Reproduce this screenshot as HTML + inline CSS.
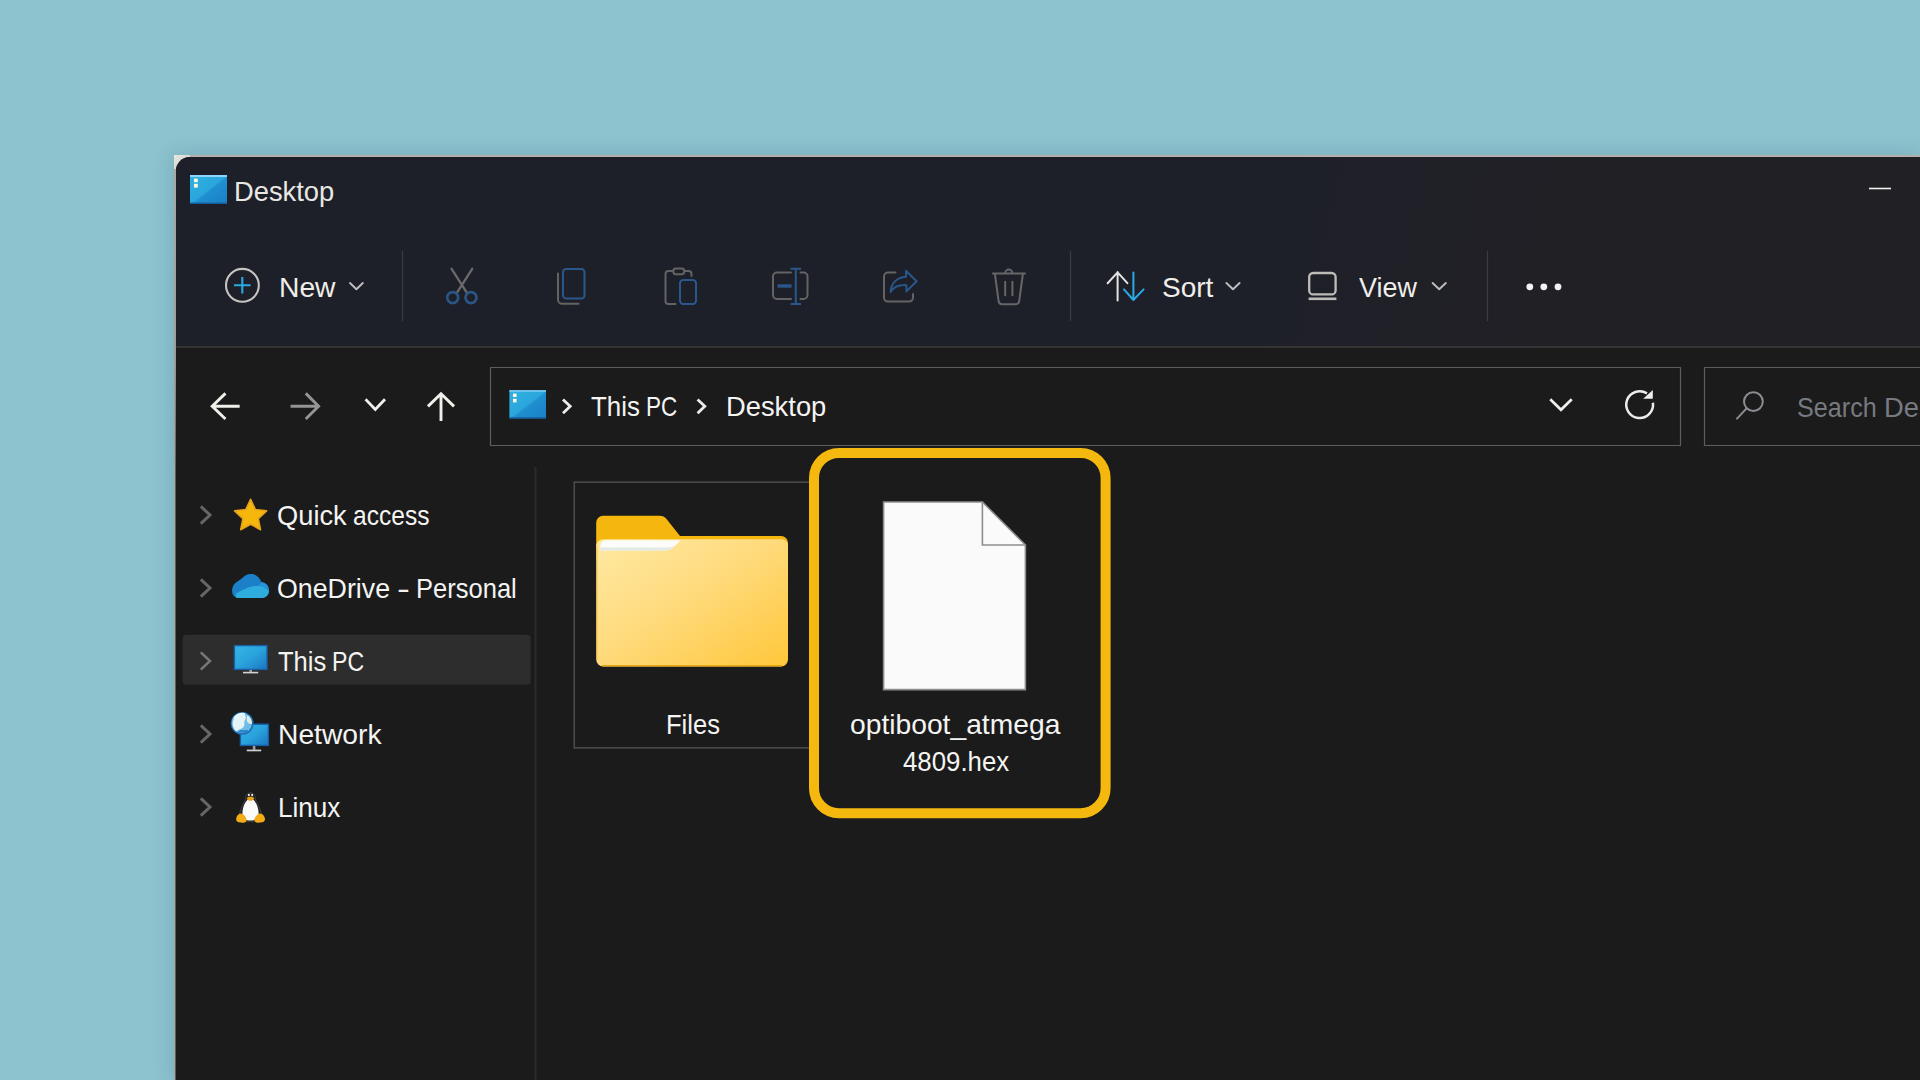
<!DOCTYPE html>
<html>
<head>
<meta charset="utf-8">
<title>Desktop</title>
<style>
  html, body { margin: 0; padding: 0; overflow: hidden; }
  body {
    width: 1920px; height: 1080px; overflow: hidden; position: relative;
    background: #8cc3cf;
    font-family: "Liberation Sans", sans-serif;
    color: #f4f4f2;
  }
  .abs { position: absolute; }
  /* window */
  #win {
    position: absolute; left: 176px; top: 157px; width: 1744px; height: 923px;
    background: #1b1b1b;
    border-top-left-radius: 14px;
    overflow: hidden;
  }
  #frame { position:absolute; left:174px; top:155px; width:1746px; height:925px; background:linear-gradient(#a5a19f 0,#9d9997 200px,#8a8888 100%); box-shadow:0 1px 20px 1px rgba(10,40,50,.15); }
  #edgeLeft { position:absolute; left:174px; top:171px; width:2px; height:909px; background:linear-gradient(90deg,#aaa7a5 0,#a29f9d 45%,#6a6969 62%,#4a4949 100%); }
  #corner { position:absolute; left:174px; top:155px; width:16px; height:16px; background:linear-gradient(135deg,#e8e7e0 0,#dcdad6 45%,#b5b1ae 100%); }
  #edgeLeftTop { position:absolute; left:174px; top:169px; width:2px; height:300px; background:linear-gradient(#aaa6a4 0,#9f9b99 60%,rgba(159,155,153,0) 100%); }
  #edgeTop { position:absolute; left:188px; top:155px; width:1732px; height:2px; background:#b3afac; }
    #chrome { position:absolute; left:0; top:0; width:1744px; height:190px; background:linear-gradient(104deg,#1e2029 0,#1e2029 63%,#202027 72%,#212025 80%,#212024 100%); }
  #chromeLine { position:absolute; left:0; top:189px; width:100%; height:2px; background:#343434; }
  .t { position:absolute; white-space:nowrap; font-size:28.5px; line-height:30px; transform-origin:left top; }
  svg { position:absolute; overflow:visible; }
</style>
</head>
<body>
<div id="frame"></div>
<div id="edgeTop"></div>
<div id="corner"></div>
<div id="win">
  <div id="chrome"></div>
  <div id="chromeLine"></div>
</div>
<div id="edgeLeft"></div>
<div id="edgeLeftTop"></div>

<!-- SIDEBAR + CONTENT LAYER -->
<svg id="main" width="1920" height="1080" viewBox="0 0 1920 1080" style="left:0;top:0;" fill="none" stroke-linecap="round" stroke-linejoin="round">
  <!-- sidebar divider -->
  <rect x="534.4" y="467" width="2.2" height="613" fill="#2b2a2c"/>
  <!-- selected row -->
  <rect x="182.6" y="634.8" width="348.2" height="50" rx="4" fill="#2d2d2d"/>
  <!-- chevrons -->
  <g stroke="#666666" stroke-width="3" stroke-linecap="butt" stroke-linejoin="miter">
    <path d="M200.8 506.4L210 515 200.8 523.6"/>
    <path d="M200.8 579.4L210 588 200.8 596.6"/>
    <path d="M200.8 652.4L210 661 200.8 669.6" stroke="#787878" stroke-width="2.5"/>
    <path d="M200.8 725.4L210 734 200.8 742.6"/>
    <path d="M200.8 798.4L210 807 200.8 815.6"/>
  </g>
  <!-- star -->
  <path d="M250.6 499.3 L255.4 509.5 L266.6 510.9 L258.3 518.6 L260.5 529.7 L250.6 524.2 L240.7 529.7 L242.9 518.6 L234.6 510.9 L245.8 509.5Z" fill="#f6b70d" stroke="#e6a21a" stroke-width="1.6" stroke-linejoin="round"/>
  <!-- onedrive -->
  <g>
    <path d="M238.600 598C234.600 598 232 594.600 232.100 590.400 232.200 587 233.400 584.600 236 582.600 239 580.400 241 579.400 242.600 577.800 244.600 575.400 247.400 574 250.800 574 255.400 574 259.400 577 261.600 582.200 265.800 582.600 269.100 585.800 269.100 590.200 269.100 594.600 265.600 598 261.200 598Z" fill="#1c80c9"/>
    <path d="M258 586C259.600 584.800 260.800 583.600 261.600 582.200 265.400 582.600 268.400 585.400 269 589.600 267.800 588.200 266.200 587.400 264.500 587 262.400 586.200 260 586 258 586Z" fill="#2794da"/>
    <path d="M236.400 597.400C235.600 596 235.600 594.600 236 593.400L242.700 590.100C246 588.400 249 587 252 586.500 256 585.800 261 586 264.500 587.400 266.500 588.200 268.200 589.600 269 591.400 268.600 595.200 265.400 598 261.200 598H238.600C237.800 598 237 597.800 236.400 597.400Z" fill="#2eacdd"/>
  </g>
  <!-- this pc -->
  <g>
    <rect x="234.400" y="645.600" width="32.600" height="23.800" fill="url(#gMon)" stroke="#1a5ea6" stroke-width="1.400" stroke-linejoin="miter"/>
    <rect x="249.400" y="669.800" width="2.600" height="2.400" fill="#9aa0a6"/>
    <rect x="243" y="671.800" width="15.200" height="1.600" fill="#cfd2d4"/>
  </g>
  <!-- network -->
  <g>
    <rect x="240.400" y="724.200" width="28" height="21.200" fill="url(#gMon)" stroke="#1a5ea6" stroke-width="1.400" stroke-linejoin="miter"/>
    <rect x="252.800" y="746" width="2.600" height="3.800" fill="#9aa0a6"/>
    <rect x="246.800" y="749.600" width="14.400" height="1.700" fill="#cfd2d4"/>
    <circle cx="242.200" cy="723.400" r="11.400" fill="#1f6fb5"/>
    <circle cx="241.800" cy="723" r="10.200" fill="#6dbbe8"/>
    <path d="M233.600 719.500C235.500 715.500 240 713.200 244 713.600 246 715.500 246.500 718 245 720 243.500 722 245.500 724.500 243.500 727 241.500 729.500 238.500 729 236.500 731.500 233 729 231.800 723.500 233.600 719.500Z" fill="#e6f3f6"/>
    <path d="M247.500 715.200C250.500 717 252.200 720.500 251.900 724 249.800 724.500 247 723 246.800 720.500 246.700 718.500 246.800 716.500 247.500 715.200Z" fill="#dfeee0"/>
    <path d="M238 731.500C241 733.500 245.500 733 248.500 730.500 246.500 729.500 244 730.500 242 730 240.500 729.700 239 730.500 238 731.500Z" fill="#2a86cf"/>
    <path d="M234 718C236.500 714.500 240.500 713 244.500 713.500" stroke="#f4fbff" stroke-width="1.200"/>
  </g>
  <!-- linux tux -->
  <g>
    <path d="M250.400 792.800C253.800 792.800 255.400 795.600 255.400 798.800 255.400 802 260.600 807.600 261.200 813.600 261.600 818 257.600 821.800 250.400 821.800 243.200 821.800 239.200 818 239.600 813.600 240.200 807.600 245.400 802 245.400 798.800 245.400 795.600 247 792.800 250.400 792.800Z" fill="#202020" stroke="#444444" stroke-width="0.900"/>
    <path d="M250.400 798.600C254.600 798.600 258.600 806.800 258.600 813.400 258.600 818.400 255.200 820.600 250.400 820.600 245.600 820.600 242.400 818.400 242.400 813.400 242.400 806.800 246.200 798.600 250.400 798.600Z" fill="#fbfbfa"/>
    <ellipse cx="248.800" cy="795" rx="1" ry="1.200" fill="#e8e8e8"/>
    <ellipse cx="252.200" cy="795" rx="1" ry="1.200" fill="#e8e8e8"/>
    <path d="M246.800 798.200C247.600 796.200 253.400 796.200 254.200 798.200 253.600 800 251.800 800.800 250.400 800.800 249 800.800 247.400 800 246.800 798.200Z" fill="#eba21c"/>
    <path d="M236.200 819.800C236 816.600 238.400 813.200 241 813.400 243.600 813.600 246.800 817.600 246.600 820.200 246.400 822.600 243.200 823 240.400 822.600 238 822.300 236.400 821.600 236.200 819.800Z" fill="#f3ab16"/>
    <path d="M265 819.400C265.200 816.600 262.600 813.200 260 813.400 257.400 813.600 254.200 817.600 254.400 820.200 254.600 822.600 257.800 823 260.600 822.600 263 822.300 264.800 821.400 265 819.400Z" fill="#f3ab16"/>
  </g>

  <!-- Files item box -->
  <path d="M812 482.200H574.200V747.800H812" stroke="#585858" stroke-width="1.200" stroke-linejoin="miter" stroke-linecap="butt"/>
  <!-- folder -->
  <g>
    <path d="M596.200 522.800a7 7 0 0 1 7-7H659.500c3.600 0 5.800 1.400 7.600 4L680 536H781a7 7 0 0 1 7 7V560H596.200Z" fill="#f5b70e"/>
    <path d="M596.200 546.600a7.400 7.400 0 0 1 7.400-7.400H781.600a6.400 6.400 0 0 1 6.400 6.400V659.600a7 7 0 0 1-7 7H603.200a7 7 0 0 1-7-7Z" fill="url(#gFolder)"/>
    <path d="M600.400 546.400c0-4 2.400-6.200 6.200-6.200H681c-4.600 2.600-7 9.800-15.500 10.200H600.400Z" fill="#fcfdfb"/>
    <path d="M600.400 547.400v3H665.500c4.400-0.200 7-2.200 9.400-5.200-2.400 1.600-5 2.200-8.400 2.200Z" fill="#e2eae5"/>
    <path d="M602 665.800H782" stroke="#e6a817" stroke-width="1.600" stroke-linecap="butt"/>
    <path d="M596.900 546.600V659" stroke="#f0b630" stroke-width="1.200" stroke-linecap="butt" opacity="0.7"/>
  </g>
  <!-- yellow highlight -->
  <rect x="814" y="453" width="291.600" height="360.200" rx="25" fill="#1b1b1b" stroke="#f4b80e" stroke-width="10"/>
  <!-- file -->
  <g>
    <path d="M883.600 502H982.400L1025.400 545V689.600H883.600Z" fill="#fafafa" stroke="#8e8e8e" stroke-width="1.600" stroke-linejoin="miter"/>
    <path d="M982.400 502V545H1025.400" fill="none" stroke="#8e8e8e" stroke-width="1.600" stroke-linejoin="miter"/>
  </g>
</svg>

<!-- ICON LAYER -->
<svg id="ico" width="1920" height="1080" viewBox="0 0 1920 1080" style="left:0;top:0;" fill="none" stroke-linecap="round" stroke-linejoin="round">
  <defs>
    <linearGradient id="gDesk" x1="0" y1="0" x2="1" y2="1">
      <stop offset="0" stop-color="#2fb2e2"/><stop offset="0.5" stop-color="#2aa6dc"/><stop offset="0.55" stop-color="#1f8fd0"/><stop offset="1" stop-color="#1a7fc6"/>
    </linearGradient>
    <linearGradient id="gFolder" x1="0" y1="0" x2="1" y2="1">
      <stop offset="0" stop-color="#ffe9a3"/><stop offset="0.45" stop-color="#ffdb7e"/><stop offset="1" stop-color="#ffc73a"/>
    </linearGradient>
    <linearGradient id="gMon" x1="0" y1="0" x2="1" y2="1">
      <stop offset="0" stop-color="#35b6e6"/><stop offset="0.5" stop-color="#2aa3dc"/><stop offset="1" stop-color="#1976c2"/>
    </linearGradient>
  </defs>

  <!-- title icon -->
  <g id="icoTitle">
    <rect x="190" y="175" width="37" height="29" fill="url(#gDesk)"/>
    <rect x="190" y="175" width="37" height="2" fill="#8fd4ff"/>
    <rect x="190" y="202.5" width="37" height="1.5" fill="#155f9e"/>
    <rect x="194" y="178.6" width="3.8" height="3.6" fill="#fff6dc"/>
    <rect x="194" y="183.8" width="3.8" height="3.8" fill="#fff6dc"/>
  </g>
  <!-- minimize -->
  <path d="M1869 188.5H1891" stroke="#f0f0f0" stroke-width="1.6" stroke-linecap="butt"/>

  <!-- New -->
  <circle cx="242.4" cy="285.3" r="16.4" stroke="#c6c4c1" stroke-width="2.1"/>
  <path d="M234 285.3H250.6M242.3 277V293.6" stroke="#2aa9e4" stroke-width="2.1" stroke-linecap="butt"/>
  <path d="M350 283l6.4 6.2 6.4-6.2" stroke="#bfbfbf" stroke-width="1.9"/>
  <!-- separators -->
  <path d="M402.5 251V321M1070.5 251V321M1487.5 251V321" stroke="#3c3d44" stroke-width="1.2" stroke-linecap="butt"/>

  <!-- cut -->
  <g stroke-width="2">
    <path d="M451.600 268.800L466.800 292.600M472.200 268.800L457 292.600" stroke="#6a6a6a" stroke-width="2.300"/>
    <circle cx="452.700" cy="297.600" r="5.500" stroke="#2a5585" stroke-width="2.700"/>
    <circle cx="471" cy="297.600" r="5.500" stroke="#2a5585" stroke-width="2.700"/>
  </g>
  <!-- copy -->
  <g stroke-width="2">
    <path d="M558 273.5V299.5a4.2 4.2 0 0 0 4.2 4.2H578.5" stroke="#636363"/>
    <rect x="563" y="269" width="21.5" height="29.6" rx="3.2" stroke="#2a578b"/>
  </g>
  <!-- paste -->
  <g stroke-width="2">
    <path d="M675.5 304H668.5a3 3 0 0 1-3-3V274a3 3 0 0 1 3-3H673M684.5 271H688.5a3 3 0 0 1 3 3V276" stroke="#636363"/>
    <rect x="673.3" y="268.6" width="11" height="5.6" rx="2.6" stroke="#636363"/>
    <rect x="680" y="280" width="16" height="24" rx="3.2" stroke="#2a578b"/>
  </g>
  <!-- rename -->
  <g stroke-width="2">
    <path d="M791 272.5H777a4 4 0 0 0-4 4V295a4 4 0 0 0 4 4H791M800.5 272.5H803.5a4 4 0 0 1 4 4V295a4 4 0 0 1-4 4H800.5" stroke="#636363"/>
    <path d="M795.8 268.8V304M790.6 268.8H801M790.6 304H801" stroke="#2a578b" stroke-linecap="butt"/>
    <path d="M777.6 286H791.6" stroke="#2a578b" stroke-width="3.4" stroke-linecap="butt"/>
  </g>
  <!-- share -->
  <g stroke-width="2">
    <path d="M895.5 272.6H888a4 4 0 0 0-4 4V297.6a4 4 0 0 0 4 4H909a4 4 0 0 0 4-4V294" stroke="#636363"/>
    <path d="M906 270.8L916.6 281.2 906.4 291.4V285.2C899.5 284.6 894.2 286.6 890.6 292 891.2 283.4 896.6 277.6 906 276.8Z" stroke="#2a578b"/>
  </g>
  <!-- delete -->
  <g stroke-width="2" stroke="#666666">
    <path d="M992.8 273.6H1025"/>
    <path d="M1005.2 273.2a3.6 3.6 0 0 1 7.2 0"/>
    <path d="M995 274.5L998.6 301.2a3.4 3.4 0 0 0 3.4 3H1015.8a3.4 3.4 0 0 0 3.4-3L1022.8 274.5"/>
    <path d="M1005.2 281.8V295.2M1012.4 281.8V295.2"/>
  </g>
  <!-- sort -->
  <g stroke-width="2">
    <path d="M1117.6 272V300.4M1107.6 283.2L1117.6 272.4 1127.4 283.2" stroke="#e4e4e2"/>
    <path d="M1133.4 272.4V300M1124 289.4L1133.4 300 1143.6 289.4" stroke="#2aa9e4"/>
  </g>
  <path d="M1226.4 283l6.6 6.2 6.6-6.2" stroke="#bfbfbf" stroke-width="1.9"/>
  <!-- view -->
  <rect x="1309.2" y="273" width="26.4" height="21.4" rx="4" stroke="#bebcb9" stroke-width="2.3"/>
  <path d="M1308.6 298.8H1336.4" stroke="#bebcb9" stroke-width="2.6" stroke-linecap="butt"/>
  <path d="M1432.6 283l6.6 6.2 6.6-6.2" stroke="#bfbfbf" stroke-width="1.9"/>
  <!-- more -->
  <g fill="#f2f2f2"><circle cx="1529.8" cy="286.8" r="3.4"/><circle cx="1543.8" cy="286.8" r="3.4"/><circle cx="1558" cy="286.8" r="3.4"/></g>

  <!-- nav arrows -->
  <g stroke-width="2.9" stroke-linecap="square" stroke-linejoin="miter">
    <path d="M238.2 406.2H213M224.4 394.4L212.2 406.2 224.400 418" stroke="#f0f0ea"/>
    <path d="M292 406.2H317.200M306.800 394.400L318.600 406.200 306.800 418" stroke="#959595"/>
    <path d="M366.600 400.400L375.300 409.400 384 400.400" stroke="#f0f0ea"/>
    <path d="M441 419.600V395M429 405.400L441 393.800 453 405.400" stroke="#f0f0ea"/>
  </g>
  <!-- address box + search box -->
  <rect x="490.5" y="367.5" width="1190" height="78" stroke="#5e5e5e" stroke-width="1.2"/>
  <path d="M1920 367.5H1704.5V445.5H1920" stroke="#5e5e5e" stroke-width="1.2"/>
  <g id="icoAddr">
    <rect x="509.4" y="390.2" width="36.6" height="28.2" fill="url(#gDesk)"/>
    <rect x="509.4" y="390.2" width="36.6" height="1.6" fill="#7fcaf5"/>
    <rect x="509.4" y="417.2" width="36.6" height="1.4" fill="#155f9e"/>
    <rect x="513" y="393.6" width="3.6" height="3.4" fill="#fff6dc"/>
    <rect x="513" y="398.8" width="3.6" height="3.6" fill="#fff6dc"/>
  </g>
  <path d="M564 400.400L570.200 406.300 564 412.200M698.600 400.400L704.800 406.300 698.600 412.200" stroke="#ececec" stroke-width="2.8" stroke-linecap="square" stroke-linejoin="miter"/>
  <path d="M1551.200 400.200L1561 409.800 1570.800 400.200" stroke="#f0f0ea" stroke-width="2.700" stroke-linecap="square" stroke-linejoin="miter"/>
  <!-- refresh -->
  <path d="M1652.92 402.79A13.4 13.4 0 1 1 1646.95 393.41" stroke="#ececec" stroke-width="2.5" stroke-linecap="butt"/>
  <path d="M1643.2 398.8L1652.8 390V398.800Z" fill="#ececec"/>
  <!-- search icon -->
  <circle cx="1753.4" cy="401.6" r="9.4" stroke="#8b8d92" stroke-width="2"/>
  <path d="M1746.6 408.4L1737 418.6" stroke="#8b8d92" stroke-width="2"/>
</svg>

<!-- TEXT START -->
<div class="t" id="tTitle" style="left:234.08px; top:176px; transform:scaleX(0.9583); color:#e9e7e3;">Desktop</div>
<div class="t" id="tNew" style="left:279.12px; top:272px; transform:scaleX(0.9909); color:#efeee9;">New</div>
<div class="t" id="tSort" style="left:1161.72px; top:272px; transform:scaleX(0.9824); color:#efeee9;">Sort</div>
<div class="t" id="tView" style="left:1358.75px; top:272px; transform:scaleX(0.9444); color:#efeee9;">View</div>
<div class="t" id="tPC1" style="left:591.10px; top:391px; transform:scaleX(0.9075);">This</div>
<div class="t" id="tPC2" style="left:646.22px; top:391px; transform:scaleX(0.7892);">PC</div>
<div class="t" id="tDesk" style="left:725.83px; top:391px; transform:scaleX(0.9593);">Desktop</div>
<div class="t" id="tSe1" style="left:1796.62px; top:392px; transform:scaleX(0.8830); color:#777a80;">Search</div>
<div class="t" id="tSe2" style="left:1884.18px; top:392px; transform:scaleX(0.9598); color:#777a80;">Desktop</div>
<div class="t" id="tQA1" style="left:277.04px; top:500px; transform:scaleX(0.9569);">Quick</div>
<div class="t" id="tQA2" style="left:353.04px; top:500px; transform:scaleX(0.8621);">access</div>
<div class="t" id="tOD1" style="left:277.46px; top:573px; transform:scaleX(0.9390);">OneDrive</div>
<div class="t" id="tOD2" style="left:397.24px; top:573px; transform:scaleX(1.3571);">-</div>
<div class="t" id="tOD3" style="left:415.81px; top:573px; transform:scaleX(0.8959);">Personal</div>
<div class="t" id="tTP1" style="left:277.80px; top:646px; transform:scaleX(0.8962);">This</div>
<div class="t" id="tTP2" style="left:332.48px; top:646px; transform:scaleX(0.8108);">PC</div>
<div class="t" id="tNW" style="left:278.02px; top:719px; transform:scaleX(0.9902);">Network</div>
<div class="t" id="tLX" style="left:277.77px; top:792px; transform:scaleX(0.9152);">Linux</div>
<div class="t" id="tFiles" style="left:666.01px; top:709px; transform:scaleX(0.8965);">Files</div>
<div class="t" id="tOpt1" style="left:849.61px; top:709px; transform:scaleX(0.9906);">optiboot_atmega</div>
<div class="t" id="tOpt2" style="left:903.10px; top:746px; transform:scaleX(0.9051);">4809.hex</div>
<!-- TEXT END -->
</body>
</html>
